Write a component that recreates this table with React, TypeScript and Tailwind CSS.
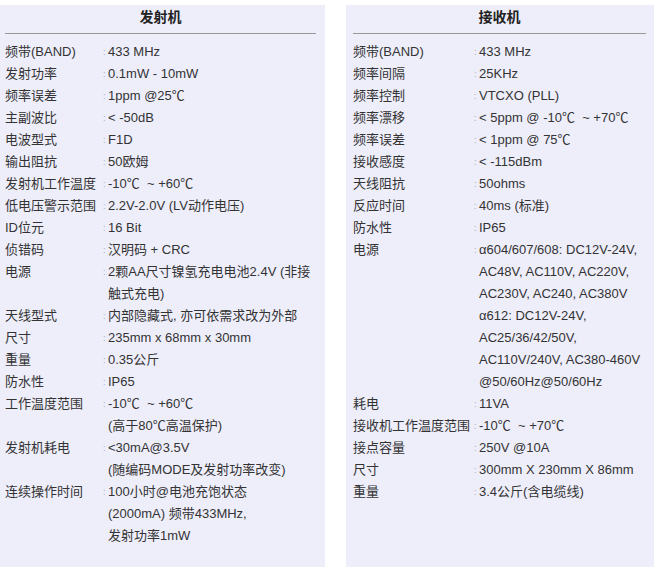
import React from 'react';

type Spec = { label: string; value: string[] };

const transmitter: Spec[] = [
  { label: '频带(BAND)', value: ['433 MHz'] },
  { label: '发射功率', value: ['0.1mW - 10mW'] },
  { label: '频率误差', value: ['1ppm @25℃'] },
  { label: '主副波比', value: ['< -50dB'] },
  { label: '电波型式', value: ['F1D'] },
  { label: '输出阻抗', value: ['50欧姆'] },
  { label: '发射机工作温度', value: ['-10℃  ~ +60℃'] },
  { label: '低电压警示范围', value: ['2.2V-2.0V (LV动作电压)'] },
  { label: 'ID位元', value: ['16 Bit'] },
  { label: '侦错码', value: ['汉明码 + CRC'] },
  { label: '电源', value: ['2颗AA尺寸镍氢充电电池2.4V (非接', '触式充电)'] },
  { label: '天线型式', value: ['内部隐藏式, 亦可依需求改为外部'] },
  { label: '尺寸', value: ['235mm x 68mm x 30mm'] },
  { label: '重量', value: ['0.35公斤'] },
  { label: '防水性', value: ['IP65'] },
  { label: '工作温度范围', value: ['-10℃  ~ +60℃', '(高于80℃高温保护)'] },
  { label: '发射机耗电', value: ['<30mA@3.5V', '(随编码MODE及发射功率改变)'] },
  { label: '连续操作时间', value: ['100小时@电池充饱状态', '(2000mA) 频带433MHz,', '发射功率1mW'] },
];

const receiver: Spec[] = [
  { label: '频带(BAND)', value: ['433 MHz'] },
  { label: '频率间隔', value: ['25KHz'] },
  { label: '频率控制', value: ['VTCXO (PLL)'] },
  { label: '频率漂移', value: ['< 5ppm @ -10℃  ~ +70℃'] },
  { label: '频率误差', value: ['< 1ppm @ 75℃'] },
  { label: '接收感度', value: ['< -115dBm'] },
  { label: '天线阻抗', value: ['50ohms'] },
  { label: '反应时间', value: ['40ms (标准)'] },
  { label: '防水性', value: ['IP65'] },
  {
    label: '电源',
    value: [
      'α604/607/608: DC12V-24V,',
      'AC48V, AC110V, AC220V,',
      'AC230V, AC240, AC380V',
      'α612: DC12V-24V,',
      'AC25/36/42/50V,',
      'AC110V/240V, AC380-460V',
      '@50/60Hz@50/60Hz',
    ],
  },
  { label: '耗电', value: ['11VA'] },
  { label: '接收机工作温度范围', value: ['-10℃  ~ +70℃'] },
  { label: '接点容量', value: ['250V @10A'] },
  { label: '尺寸', value: ['300mm X 230mm X 86mm'] },
  { label: '重量', value: ['3.4公斤(含电缆线)'] },
];

const Panel: React.FC<{ title: string; rows: Spec[]; labelW: string; className: string }> = ({
  title,
  rows,
  labelW,
  className,
}) => (
  <div className={`h-[562px] bg-[#eeeefb] pt-px ${className}`}>
    <div className="h-[22px] text-center text-[14px] font-bold leading-[22px] text-[#222]">{title}</div>
    <div className="mt-[5px] h-px bg-[#999]" />
    <div className="mt-[7px]">
      {rows.map((row, i) => (
        <div key={i} className="flex text-[13px] leading-[22px] text-[#333]">
          <div className={`${labelW} shrink-0 whitespace-nowrap`}>{row.label}</div>
          <div className="w-[5px] shrink-0 text-[9px] text-[#aaa]">:</div>
          <div className="whitespace-pre">
            {row.value.map((line, j) => (
              <div key={j}>{line}</div>
            ))}
          </div>
        </div>
      ))}
    </div>
  </div>
);

export default function App() {
  return (
    <div
      className="flex w-[661px] bg-white pt-[5px]"
      style={{ fontFamily: '"Liberation Sans", Arial, "Noto Sans CJK SC", sans-serif' }}
    >
      <Panel title="发射机" rows={transmitter} labelW="w-[98px]" className="w-[325px] pl-[5px] pr-[9px]" />
      <div className="w-[21px] shrink-0" />
      <Panel title="接收机" rows={receiver} labelW="w-[121px]" className="w-[308px] pl-[7px] pr-[8px]" />
    </div>
  );
}
